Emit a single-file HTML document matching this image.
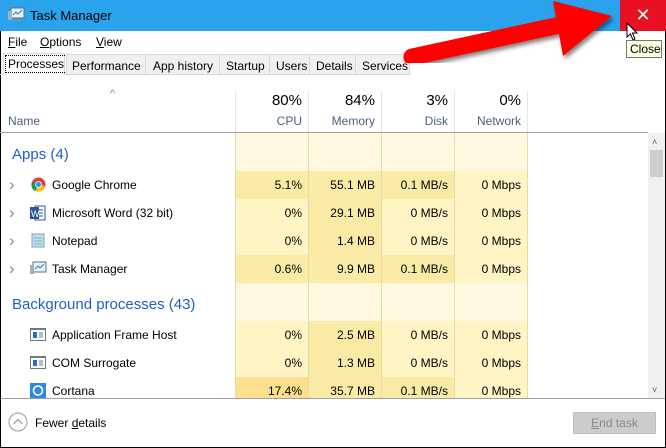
<!DOCTYPE html><html><head><style>
*{margin:0;padding:0;box-sizing:border-box}
body{width:666px;height:448px;overflow:hidden;background:#fff;font-family:"Liberation Sans",sans-serif;font-size:12px;color:#000;position:relative}
.a{position:absolute;white-space:nowrap}
.r{text-align:right}
.chev{font-size:17px;color:#8a8a8a;line-height:17px}
</style></head><body>
<div class="a" style="left:0;top:0;width:666px;height:448px;border:1px solid #000;border-top:none"></div>
<div class="a" style="left:0;top:0;width:666px;height:31px;background:#2ba3ec"></div>
<svg class="a" style="left:8px;top:7px" width="18" height="16"><rect x="3" y="1" width="13" height="10" fill="#e8f4fc" stroke="#5a6f80"/><path d="M5 8 L8 5 L10 7 L14 3" stroke="#2a7fd0" fill="none"/><rect x="0" y="4" width="4" height="9" fill="#a0b0bc"/><rect x="6" y="12" width="7" height="2" fill="#8090a0"/></svg>
<div class="a" style="left:30px;top:8px;font-size:13px">Task Manager</div>
<div class="a" style="left:620px;top:0;width:46px;height:31px;background:#e81123;color:#fff;font-size:18px;text-align:center;line-height:30px">✕</div>
<div class="a" style="left:8px;top:35px;font-size:12px"><u>F</u>ile</div>
<div class="a" style="left:40px;top:35px"><u>O</u>ptions</div>
<div class="a" style="left:96px;top:35px"><u>V</u>iew</div>
<div class="a" style="left:0;top:53px;width:410px;height:22px;border-bottom:1px solid #d9d9d9"></div>
<div class="a" style="left:3px;top:53px;width:62px;height:22px;background:#fff;border:1px solid #d9d9d9;border-bottom:none"></div>
<div class="a" style="left:5px;top:55px;padding:1px 2px;border:1px dotted #000">Processes</div>
<div class="a" style="left:66px;top:54px;width:344px;height:21px;background:#f0f0f0;border:1px solid #d9d9d9"></div>
<div class="a" style="left:72px;top:59px">Performance</div>
<div class="a" style="left:145px;top:54px;height:21px;border-left:1px solid #d9d9d9;padding:5px 0 0 7px">App history</div>
<div class="a" style="left:219px;top:54px;height:21px;border-left:1px solid #d9d9d9;padding:5px 0 0 6px">Startup</div>
<div class="a" style="left:269px;top:54px;height:21px;border-left:1px solid #d9d9d9;padding:5px 0 0 6px">Users</div>
<div class="a" style="left:309px;top:54px;height:21px;border-left:1px solid #d9d9d9;padding:5px 0 0 6px">Details</div>
<div class="a" style="left:355px;top:54px;height:21px;border-left:1px solid #d9d9d9;padding:5px 0 0 6px">Services</div>
<div class="a" style="left:110px;top:88px;color:#888;font-size:11px">^</div>
<div class="a" style="left:8px;top:114px;color:#4c607a;font-size:12px">Name</div>
<div class="a" style="left:0;top:132px;width:648px;height:1px;background:#a0a0a0"></div>
<div class="a" style="left:235px;top:91px;width:1px;height:41px;background:#e5e5e5"></div>
<div class="a" style="left:308px;top:91px;width:1px;height:41px;background:#e5e5e5"></div>
<div class="a" style="left:381px;top:91px;width:1px;height:41px;background:#e5e5e5"></div>
<div class="a" style="left:454px;top:91px;width:1px;height:41px;background:#e5e5e5"></div>
<div class="a" style="left:527px;top:91px;width:1px;height:41px;background:#e5e5e5"></div>
<div class="a r" style="left:236px;top:92px;width:66px;font-size:15px">80%</div>
<div class="a r" style="left:236px;top:114px;width:66px;color:#4c607a">CPU</div>
<div class="a r" style="left:309px;top:92px;width:66px;font-size:15px">84%</div>
<div class="a r" style="left:309px;top:114px;width:66px;color:#4c607a">Memory</div>
<div class="a r" style="left:382px;top:92px;width:66px;font-size:15px">3%</div>
<div class="a r" style="left:382px;top:114px;width:66px;color:#4c607a">Disk</div>
<div class="a r" style="left:455px;top:92px;width:66px;font-size:15px">0%</div>
<div class="a r" style="left:455px;top:114px;width:66px;color:#4c607a">Network</div>
<div class="a" style="left:236px;top:133px;width:292px;height:265px;background:#fff8e1"></div>
<div class="a" style="left:236px;top:171px;width:72px;height:28px;background:#f9eba6"></div>
<div class="a" style="left:309px;top:171px;width:72px;height:28px;background:#f9eba6"></div>
<div class="a" style="left:382px;top:171px;width:72px;height:28px;background:#f9eba6"></div>
<div class="a" style="left:455px;top:171px;width:72px;height:28px;background:#fff4c4"></div>
<div class="a" style="left:236px;top:199px;width:72px;height:56px;background:#fff4c4"></div>
<div class="a" style="left:309px;top:199px;width:72px;height:56px;background:#f9eba6"></div>
<div class="a" style="left:382px;top:199px;width:72px;height:56px;background:#fff4c4"></div>
<div class="a" style="left:455px;top:199px;width:72px;height:56px;background:#fff4c4"></div>
<div class="a" style="left:236px;top:255px;width:72px;height:28px;background:#f9eba6"></div>
<div class="a" style="left:309px;top:255px;width:72px;height:28px;background:#f9eba6"></div>
<div class="a" style="left:382px;top:255px;width:72px;height:28px;background:#f9eba6"></div>
<div class="a" style="left:455px;top:255px;width:72px;height:28px;background:#fff4c4"></div>
<div class="a" style="left:236px;top:321px;width:72px;height:56px;background:#fff4c4"></div>
<div class="a" style="left:309px;top:321px;width:72px;height:77px;background:#f9eba6"></div>
<div class="a" style="left:382px;top:321px;width:72px;height:56px;background:#fff4c4"></div>
<div class="a" style="left:455px;top:321px;width:72px;height:77px;background:#fff4c4"></div>
<div class="a" style="left:236px;top:377px;width:72px;height:21px;background:#fde08e"></div>
<div class="a" style="left:382px;top:377px;width:72px;height:21px;background:#f9eba6"></div>
<div class="a" style="left:235px;top:133px;width:1px;height:265px;background:#ecd9a8"></div>
<div class="a" style="left:308px;top:133px;width:1px;height:265px;background:#ecd9a8"></div>
<div class="a" style="left:381px;top:133px;width:1px;height:265px;background:#ecd9a8"></div>
<div class="a" style="left:454px;top:133px;width:1px;height:265px;background:#ecd9a8"></div>
<div class="a" style="left:527px;top:133px;width:1px;height:265px;background:#ecd9a8"></div>
<div class="a" style="left:12px;top:146px;color:#1e5fc8;font-size:15px">Apps (4)</div>
<div class="a" style="left:12px;top:296px;color:#1e5fc8;font-size:15px">Background processes (43)</div>
<div class="a chev" style="left:9px;top:176px">›</div>
<div class="a chev" style="left:9px;top:204px">›</div>
<div class="a chev" style="left:9px;top:232px">›</div>
<div class="a chev" style="left:9px;top:260px">›</div>
<svg class="a" style="left:31px;top:177px" width="15" height="15"><circle cx="7.5" cy="7.5" r="7" fill="#db4437"/><path d="M7.5 7.5 L14 9 A7 7 0 0 1 4 14 Z" fill="#f4c20d"/><path d="M7.5 7.5 L4 14 A7 7 0 0 1 1 5 Z" fill="#0f9d58"/><circle cx="7.5" cy="7.5" r="3.3" fill="#fff"/><circle cx="7.5" cy="7.5" r="2.5" fill="#4285f4"/></svg>
<svg class="a" style="left:30px;top:205px" width="16" height="16"><rect x="5" y="1" width="10" height="14" fill="#fff" stroke="#2b579a"/><path d="M8 5h5M8 8h5M8 11h5" stroke="#2b579a"/><rect x="0" y="2" width="9" height="12" fill="#2b579a"/><text x="1" y="12" fill="#fff" font-size="9" font-family="Liberation Sans">W</text></svg>
<svg class="a" style="left:30px;top:232px" width="16" height="16"><rect x="2" y="2" width="12" height="13" fill="#bfe0f0" stroke="#7aa"/><path d="M4 6h8M4 9h8M4 12h8" stroke="#8ab"/></svg>
<svg class="a" style="left:30px;top:261px" width="17" height="15"><rect x="3" y="1" width="13" height="10" fill="#e8f4fc" stroke="#5a6f80"/><path d="M5 8 L8 5 L10 7 L14 3" stroke="#2a7fd0" fill="none"/><rect x="0" y="4" width="4" height="9" fill="#a0b0bc"/></svg>
<svg class="a" style="left:30px;top:328px" width="16" height="13"><rect x="0.5" y="0.5" width="15" height="12" fill="#fff" stroke="#6a7a8a"/><rect x="0" y="0" width="16" height="2" fill="#6a7a8a"/><rect x="3" y="4" width="4" height="6" fill="#1e6fd0"/><path d="M9 5h4M9 7h4M9 9h4" stroke="#6a7a8a"/></svg>
<svg class="a" style="left:30px;top:356px" width="16" height="13"><rect x="0.5" y="0.5" width="15" height="12" fill="#fff" stroke="#6a7a8a"/><rect x="0" y="0" width="16" height="2" fill="#6a7a8a"/><rect x="3" y="4" width="4" height="6" fill="#1e6fd0"/><path d="M9 5h4M9 7h4M9 9h4" stroke="#6a7a8a"/></svg>
<svg class="a" style="left:30px;top:383px" width="16" height="15"><rect width="16" height="15" fill="#2d8ae0"/><circle cx="8" cy="7.5" r="4.5" fill="none" stroke="#fff" stroke-width="1.6"/></svg>
<div class="a" style="left:52px;top:178px">Google Chrome</div>
<div class="a" style="left:52px;top:206px">Microsoft Word (32 bit)</div>
<div class="a" style="left:52px;top:234px">Notepad</div>
<div class="a" style="left:52px;top:262px">Task Manager</div>
<div class="a" style="left:52px;top:328px">Application Frame Host</div>
<div class="a" style="left:52px;top:356px">COM Surrogate</div>
<div class="a" style="left:52px;top:384px">Cortana</div>
<div class="a r" style="left:236px;top:178px;width:66px">5.1%</div><div class="a r" style="left:309px;top:178px;width:66px">55.1 MB</div><div class="a r" style="left:382px;top:178px;width:66px">0.1 MB/s</div><div class="a r" style="left:455px;top:178px;width:66px">0 Mbps</div>
<div class="a r" style="left:236px;top:206px;width:66px">0%</div><div class="a r" style="left:309px;top:206px;width:66px">29.1 MB</div><div class="a r" style="left:382px;top:206px;width:66px">0 MB/s</div><div class="a r" style="left:455px;top:206px;width:66px">0 Mbps</div>
<div class="a r" style="left:236px;top:234px;width:66px">0%</div><div class="a r" style="left:309px;top:234px;width:66px">1.4 MB</div><div class="a r" style="left:382px;top:234px;width:66px">0 MB/s</div><div class="a r" style="left:455px;top:234px;width:66px">0 Mbps</div>
<div class="a r" style="left:236px;top:262px;width:66px">0.6%</div><div class="a r" style="left:309px;top:262px;width:66px">9.9 MB</div><div class="a r" style="left:382px;top:262px;width:66px">0.1 MB/s</div><div class="a r" style="left:455px;top:262px;width:66px">0 Mbps</div>
<div class="a r" style="left:236px;top:328px;width:66px">0%</div><div class="a r" style="left:309px;top:328px;width:66px">2.5 MB</div><div class="a r" style="left:382px;top:328px;width:66px">0 MB/s</div><div class="a r" style="left:455px;top:328px;width:66px">0 Mbps</div>
<div class="a r" style="left:236px;top:356px;width:66px">0%</div><div class="a r" style="left:309px;top:356px;width:66px">1.3 MB</div><div class="a r" style="left:382px;top:356px;width:66px">0 MB/s</div><div class="a r" style="left:455px;top:356px;width:66px">0 Mbps</div>
<div class="a r" style="left:236px;top:384px;width:66px">17.4%</div><div class="a r" style="left:309px;top:384px;width:66px">35.7 MB</div><div class="a r" style="left:382px;top:384px;width:66px">0.1 MB/s</div><div class="a r" style="left:455px;top:384px;width:66px">0 Mbps</div>
<div class="a" style="left:648px;top:133px;width:17px;height:265px;background:#f0f0f0"></div>
<div class="a" style="left:650px;top:150px;width:13px;height:27px;background:#cdcdcd"></div>
<div class="a" style="left:652px;top:137px;font-size:9px;color:#606060">˄</div>
<div class="a" style="left:652px;top:385px;font-size:9px;color:#606060">˅</div>
<div class="a" style="left:1px;top:398px;width:664px;height:1px;background:#a0a0a0"></div>
<svg class="a" style="left:8px;top:412px" width="20" height="20"><circle cx="10" cy="10" r="9" fill="none" stroke="#999"/><path d="M5.5 12 L10 7.5 L14.5 12" fill="none" stroke="#999" stroke-width="1.2"/></svg>
<div class="a" style="left:35px;top:416px">Fewer <u>d</u>etails</div>
<div class="a" style="left:573px;top:412px;width:83px;height:22px;background:#ccc;border:1px solid #bfbfbf;color:#888;text-align:center;line-height:20px"><u>E</u>nd task</div>
<svg class="a" style="left:395px;top:0" width="230" height="75">
<defs><filter id="s"><feDropShadow dx="2" dy="3" stdDeviation="2" flood-color="#000" flood-opacity="0.5"/></filter></defs>
<g filter="url(#s)" fill="#f00"><path d="M17 57 L165 25" stroke="#f00" stroke-width="17" stroke-linecap="round"/><path d="M158 1 L168 56 L217 16 Z"/></g></svg>
<svg class="a" style="left:626px;top:22px" width="14" height="20"><path d="M1 1 L1 15 L4.5 12 L7 18 L9 17 L6.5 11 L11 11 Z" fill="#fff" stroke="#000"/></svg>
<div class="a" style="left:626px;top:40px;width:36px;height:18px;background:#ffffe1;border:1px solid #767676;font-size:12px;padding:1px 0 0 3px">Close</div>
</body></html>
